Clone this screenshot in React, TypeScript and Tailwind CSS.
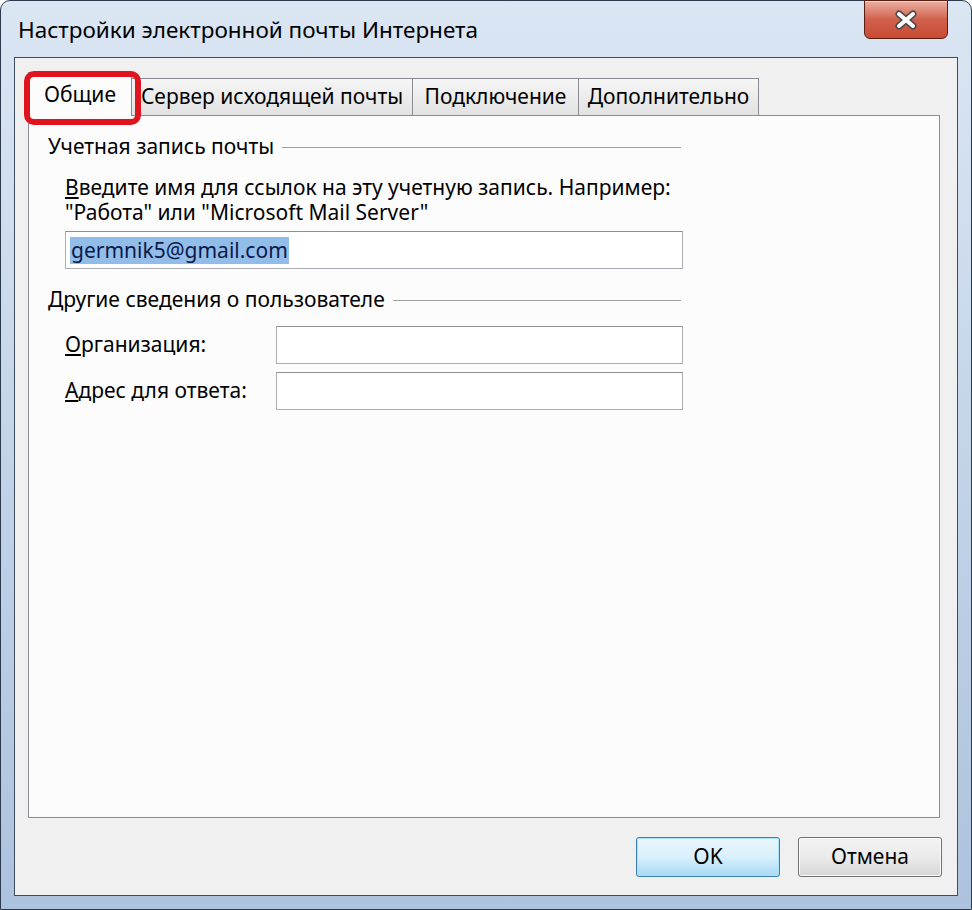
export default function App() {
  const tabBase =
    "flex h-[37px] items-center justify-center -ml-px border border-b-0 border-[#898c95] bg-gradient-to-b from-[#f6f6f6] to-[#e2e2e2] whitespace-nowrap";

  return (
    <div className="w-[972px] h-[910px] overflow-hidden bg-white font-['Noto_Sans',sans-serif] text-[21px] text-black">
      <div className="flex h-full flex-col rounded-t-[10px] border border-[#2b3a4d] bg-gradient-to-b from-[#dbe6f3] via-[#c3d4e9] to-[#adc2dd]">
        {/* title bar */}
        <div className="flex h-[56px] shrink-0 items-start">
          <div className="flex-1 pl-[17px] pt-[14px] text-[22.5px] leading-[30px] whitespace-nowrap">
            Настройки электронной почты Интернета
          </div>
          <div className="mr-[23px] -mt-px flex h-[39px] w-[84px] items-center justify-center rounded-b-[6px] border border-[#5a1d12] bg-gradient-to-b from-[#eab0a2] via-[#d0604c] to-[#c94a33] shadow-[inset_0_1px_0_rgba(255,255,255,0.5)]">
            <svg width="26" height="20" viewBox="0 0 26 20">
              <path d="M6 4 L20 16 M20 4 L6 16" stroke="#4a4a4a" strokeWidth="7" strokeLinecap="round" />
              <path d="M6 4 L20 16 M20 4 L6 16" stroke="#ffffff" strokeWidth="4" strokeLinecap="round" />
            </svg>
          </div>
        </div>

        {/* client area */}
        <div className="relative mx-[13px] flex h-[839px] shrink-0 flex-col border border-[#3f4d5f] bg-[#f0f0f0] pl-[13px] pr-[17px] pt-[14px]">
          {/* tabs */}
          <div className="flex h-[43px] items-end">
            <div className="relative z-10 -mb-px flex h-[44px] w-[104px] items-center justify-center border border-b-0 border-[#898c95] bg-[#fcfcfc] whitespace-nowrap">
              Общие
            </div>
            <div className={`${tabBase} w-[282px]`}>Сервер исходящей почты</div>
            <div className={`${tabBase} w-[167px]`}>Подключение</div>
            <div className={`${tabBase} w-[181px]`}>Дополнительно</div>
          </div>

          {/* panel */}
          <div className="h-[703px] border border-[#898c95] bg-[#fcfcfc] pl-[19px] pt-[19px]">
            <div className="flex h-[24px] w-[633px] items-center gap-[8px]">
              <span className="whitespace-nowrap">Учетная запись почты</span>
              <div className="h-px flex-1 bg-[#a0a0a0]" />
            </div>
            <div className="pl-[17px]">
              <div className="mt-[16px] flex h-[25px] items-center whitespace-nowrap">
                <span>
                  <span className="underline">В</span>ведите имя для ссылок на эту учетную запись. Например:
                </span>
              </div>
              <div className="flex h-[25px] items-center whitespace-nowrap">"Работа" или "Microsoft Mail Server"</div>
              <div className="mt-[6px] flex h-[38px] w-[618px] items-center border border-[#abadb3] border-t-[#8e8f8f] bg-white pl-[4px]">
                <span className="bg-[#93bde9] px-[1px] leading-[27px] text-[#0b1a4a]">germnik5@gmail.com</span>
              </div>
            </div>

            <div className="mt-[19px] flex h-[24px] w-[633px] items-center gap-[8px]">
              <span className="whitespace-nowrap">Другие сведения о пользователе</span>
              <div className="h-px flex-1 bg-[#a0a0a0]" />
            </div>
            <div className="pl-[17px]">
              <div className="mt-[14px] flex items-center">
                <span className="w-[211px] whitespace-nowrap">
                  <span className="underline">О</span>рганизация:
                </span>
                <div className="h-[38px] w-[407px] border border-[#abadb3] border-t-[#8e8f8f] bg-white" />
              </div>
              <div className="mt-[8px] flex items-center">
                <span className="w-[211px] whitespace-nowrap">
                  <span className="underline">А</span>дрес для ответа:
                </span>
                <div className="h-[38px] w-[407px] border border-[#abadb3] border-t-[#8e8f8f] bg-white" />
              </div>
            </div>
          </div>

          {/* buttons */}
          <div className="-mr-[2px] mt-[19px] flex justify-end gap-[18px]">
            <button className="h-[40px] w-[144px] rounded-[3px] border border-[#3c7fb1] bg-gradient-to-b from-[#eaf6fd] via-[#d9f0fc] to-[#a7d9f5] shadow-[inset_0_0_0_1px_#a9e1fb]">
              OK
            </button>
            <button className="h-[40px] w-[144px] rounded-[3px] border border-[#707070] bg-gradient-to-b from-[#f2f2f2] via-[#ebebeb] to-[#d6d6d6] shadow-[inset_0_0_0_1px_#fbfbfb]">
              Отмена
            </button>
          </div>

          {/* red highlight around the first tab */}
          <div className="pointer-events-none absolute left-[9px] top-[13px] z-20 h-[54px] w-[117px] rounded-[10px] border-[6px] border-[#e0141e]" />
        </div>
      </div>
    </div>
  );
}
